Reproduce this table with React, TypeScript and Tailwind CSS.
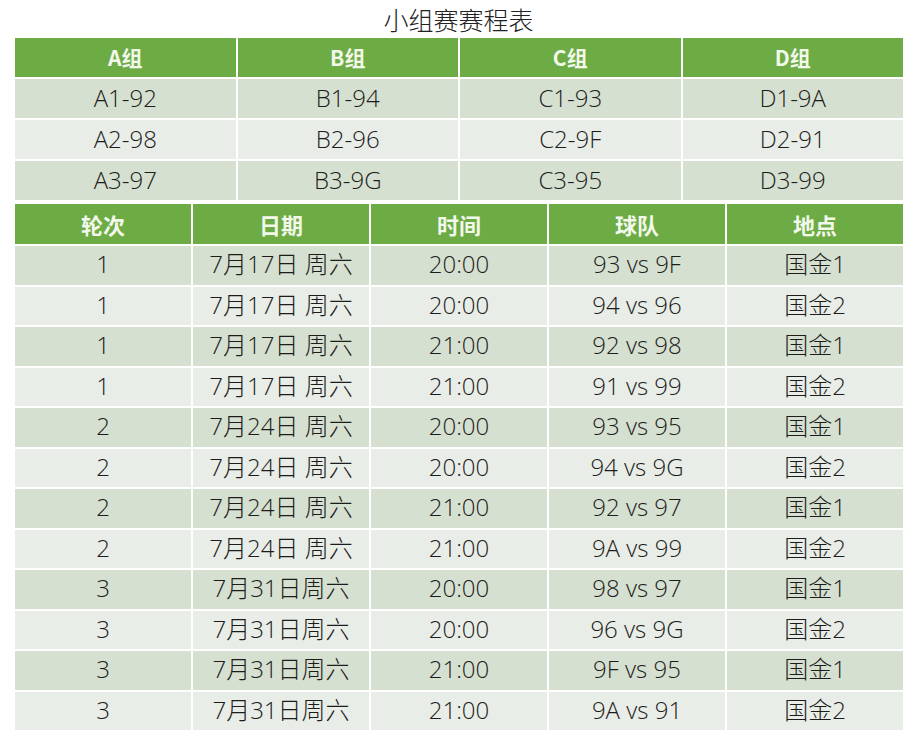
import React from "react";

const groups = [
  ["A1-92", "B1-94", "C1-93", "D1-9A"],
  ["A2-98", "B2-96", "C2-9F", "D2-91"],
  ["A3-97", "B3-9G", "C3-95", "D3-99"],
];

const matches = [
  ["1", "7月17日 周六", "20:00", "93 vs 9F", "国金1"],
  ["1", "7月17日 周六", "20:00", "94 vs 96", "国金2"],
  ["1", "7月17日 周六", "21:00", "92 vs 98", "国金1"],
  ["1", "7月17日 周六", "21:00", "91 vs 99", "国金2"],
  ["2", "7月24日 周六", "20:00", "93 vs 95", "国金1"],
  ["2", "7月24日 周六", "20:00", "94 vs 9G", "国金2"],
  ["2", "7月24日 周六", "21:00", "92 vs 97", "国金1"],
  ["2", "7月24日 周六", "21:00", "9A vs 99", "国金2"],
  ["3", "7月31日周六", "20:00", "98 vs 97", "国金1"],
  ["3", "7月31日周六", "20:00", "96 vs 9G", "国金2"],
  ["3", "7月31日周六", "21:00", "9F vs 95", "国金1"],
  ["3", "7月31日周六", "21:00", "9A vs 91", "国金2"],
];

const font = { fontFamily: '"Noto Sans CJK SC", "Noto Sans", sans-serif' };
const bodyFont = { fontFamily: '"Open Sans", "Noto Sans CJK SC", sans-serif' };

export default function App() {
  return (
    <div className="w-[917px] h-[743px] bg-white text-[#1c1c1c]" style={font}>
      <div className="h-[38px] flex items-center justify-center text-[25px] font-light leading-none pt-[1px] text-[#222]">
        小组赛赛程表
      </div>
      <div className="mx-[15px] w-[888px]">
        <div className="grid grid-cols-4 gap-[2px] bg-white">
          {["A组", "B组", "C组", "D组"].map((h) => (
            <div
              key={h}
              className="h-[39px] pb-[1px] bg-[#6dab45] flex items-center justify-center text-[21px] font-bold text-[#f2f8ea] leading-none"
            >
              {h}
            </div>
          ))}
          {groups.map((row, i) =>
            row.map((c, j) => (
              <div
                key={i + "-" + j}
                style={bodyFont}
                className={
                  "h-[39px] pb-[2px] flex items-center justify-center text-[24px] font-light leading-none " +
                  (i % 2 === 0 ? "bg-[#d6e0d0]" : "bg-[#e9ede7]")
                }
              >
                {c}
              </div>
            ))
          )}
        </div>
        <div className="mt-[4px] grid grid-cols-5 gap-[2px] bg-white">
          {["轮次", "日期", "时间", "球队", "地点"].map((h) => (
            <div
              key={h}
              className="h-[40px] pb-[1px] bg-[#6dab45] flex items-center justify-center text-[22px] font-bold text-[#f2f8ea] leading-none"
            >
              {h}
            </div>
          ))}
          {matches.map((row, i) =>
            row.map((c, j) => (
              <div
                key={i + "-" + j}
                style={bodyFont}
                className={
                  "h-[38.5px] pb-[2px] flex items-center justify-center text-[24px] font-light leading-none " +
                  (i % 2 === 0 ? "bg-[#d6e0d0]" : "bg-[#e9ede7]")
                }
              >
                {c}
              </div>
            ))
          )}
        </div>
      </div>
    </div>
  );
}
